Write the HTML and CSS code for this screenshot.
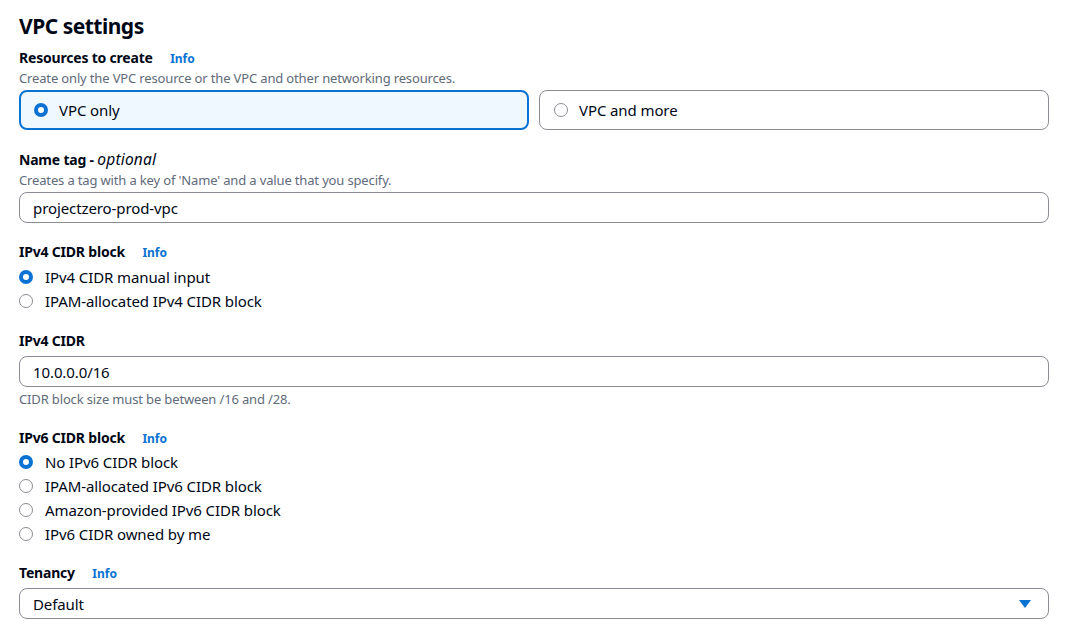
FILE: index.html
```html
<!DOCTYPE html>
<html>
<head>
<meta charset="utf-8">
<link rel="stylesheet" href="styles.css">
</head>
<body>
<main class="page">
  <h1 class="title">VPC settings</h1>

  <section class="field f-resources">
    <div class="label">Resources to create <a class="info">Info</a></div>
    <div class="desc">Create only the VPC resource or the VPC and other networking resources.</div>
    <div class="tiles">
      <div class="tile selected"><span class="radio on"></span><span>VPC only</span></div>
      <div class="tile"><span class="radio"></span><span>VPC and more</span></div>
    </div>
  </section>

  <section class="field f-name">
    <div class="label">Name tag - <i>optional</i></div>
    <div class="desc">Creates a tag with a key of 'Name' and a value that you specify.</div>
    <div class="input">projectzero-prod-vpc</div>
  </section>

  <section class="field f-ipv4block">
    <div class="label">IPv4 CIDR block <a class="info">Info</a></div>
    <div class="radios">
      <div class="opt"><span class="radio on"></span>IPv4 CIDR manual input</div>
      <div class="opt"><span class="radio"></span>IPAM-allocated IPv4 CIDR block</div>
    </div>
  </section>

  <section class="field f-ipv4">
    <div class="label">IPv4 CIDR</div>
    <div class="input">10.0.0.0/16</div>
    <div class="desc hint">CIDR block size must be between /16 and /28.</div>
  </section>

  <section class="field f-ipv6">
    <div class="label">IPv6 CIDR block <a class="info">Info</a></div>
    <div class="radios">
      <div class="opt"><span class="radio on"></span>No IPv6 CIDR block</div>
      <div class="opt"><span class="radio"></span>IPAM-allocated IPv6 CIDR block</div>
      <div class="opt"><span class="radio"></span>Amazon-provided IPv6 CIDR block</div>
      <div class="opt"><span class="radio"></span>IPv6 CIDR owned by me</div>
    </div>
  </section>

  <section class="field f-tenancy">
    <div class="label">Tenancy <a class="info">Info</a></div>
    <div class="input select"><span>Default</span>
      <svg class="caret" width="12" height="10" viewBox="0 0 12 10"><path d="M0 1 H12 L6 9 Z" fill="#0972d3"/></svg>
    </div>
  </section>
</main>
</body>
</html>
```

FILE: styles.css
```css
* { box-sizing: border-box; }
html, body { margin: 0; padding: 0; background: #fff; }
body {
  font-family: "Noto Sans", "Open Sans", sans-serif;
  color: #000716;
  font-size: 15px;
}
.page {
  padding: 12px 16px 0 19px;
  display: flex;
  flex-direction: column;
}
.title {
  margin: 0;
  font-size: 21px;
  font-weight: 700;
  line-height: 28px;
  letter-spacing: -0.5px;
}
.field { display: flex; flex-direction: column; }
.label {
  font-size: 14px;
  font-weight: 700;
  line-height: 19px;
  height: 21px;
  letter-spacing: -0.2px;
}
.label i {
  font-weight: 400;
  font-size: 15.5px;
  line-height: 14px;
  letter-spacing: 0.2px;
}
.info {
  color: #0972d3;
  font-size: 12px;
  font-weight: 700;
  margin-left: 14px;
  letter-spacing: 0;
}
.desc {
  color: #5f6b7a;
  font-size: 13px;
  line-height: 18px;
  letter-spacing: -0.15px;
}
.f-resources { margin-top: 8px; }
.tiles {
  display: grid;
  grid-template-columns: 1fr 1fr;
  gap: 10px;
  margin-top: 3px;
}
.tile {
  height: 40px;
  border: 1px solid #8c8c94;
  border-radius: 8px;
  display: flex;
  align-items: center;
  gap: 11px;
  padding-left: 14px;
  font-size: 15px;
  letter-spacing: -0.1px;
}
.tile.selected {
  border: 2px solid #0972d3;
  background: #f0f8ff;
  padding-left: 13px;
}
.radio {
  width: 14px;
  height: 14px;
  border-radius: 50%;
  border: 1px solid #8c8c94;
  background: #fff;
  flex: none;
}
.radio.on {
  border: 4px solid #0972d3;
}
.f-name { margin-top: 20px; }
.input {
  margin-top: 4px;
  height: 31px;
  border: 1px solid #8c8c94;
  border-radius: 8px;
  display: flex;
  align-items: center;
  padding-left: 13px;
  font-size: 15px;
  letter-spacing: -0.1px;
}
.f-name .input { margin-top: 3px; }
.f-ipv4block { margin-top: 19px; }
.radios {
  display: flex;
  flex-direction: column;
  margin-top: 2px;
}
.opt {
  height: 24px;
  display: flex;
  align-items: center;
  gap: 12px;
  font-size: 15px;
  letter-spacing: -0.1px;
}
.f-ipv4 { margin-top: 18px; }
.f-ipv4 .input { margin-top: 4px; }
.hint { margin-top: 3px; }
.f-ipv6 { margin-top: 20px; }
.f-ipv6 .radios { margin-top: 1px; }
.f-tenancy { margin-top: 17px; }
.select {
  justify-content: space-between;
  padding-right: 17px;
}
.caret { display: block; }
```
